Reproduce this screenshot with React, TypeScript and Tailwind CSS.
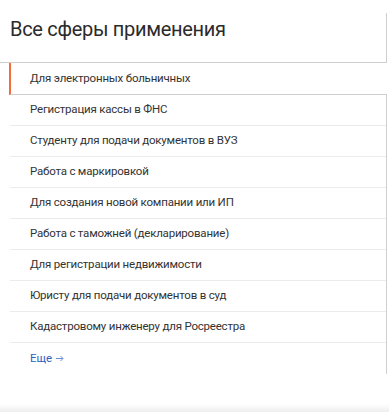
const items = [
  "Регистрация кассы в ФНС",
  "Студенту для подачи документов в ВУЗ",
  "Работа с маркировкой",
  "Для создания новой компании или ИП",
  "Работа с таможней (декларирование)",
  "Для регистрации недвижимости",
  "Юристу для подачи документов в суд",
  "Кадастровому инженеру для Росреестра",
];

export default function App() {
  return (
    <div className="flex h-[412px] w-[389px] flex-col overflow-hidden bg-white font-['Roboto',sans-serif] text-[#333]">
      <div className="pt-[13px]">
        <div className="h-[50px] w-[387px] border-r border-b border-[#cfcfcf] pt-[5px] pl-[10px]">
          <h1 className="text-[20px] leading-[22px] tracking-[-0.3px] text-[#2b2b2b]">Все сферы применения</h1>
        </div>
      </div>
      <div className="ml-[9px] flex h-[32px] w-[378px] items-center border-l-2 border-b border-l-[#f26d3d] border-b-[#cfcfcf] pl-[19px] text-[11.5px] tracking-[-0.2px]">
        Для электронных больничных
      </div>
      <div className="ml-[10px] w-[377px] border-r border-[#cfcfcf]">
        {items.map((t) => (
          <div key={t} className="flex h-[31px] items-center border-b border-[#ececec] pl-[20px] text-[11.5px] tracking-[-0.2px]">
            {t}
          </div>
        ))}
        <div className="flex h-[31px] items-center gap-[4px] pl-[20px] text-[11.5px] text-[#2f5fbf]">
          <span>Еще</span>
          <svg width="8" height="7" viewBox="0 0 8 7" fill="none" stroke="#6b8fd6" strokeWidth="1">
            <path d="M0 3.5h7M4.5 1l2.5 2.5L4.5 6" />
          </svg>
        </div>
      </div>
      <div className="mt-auto h-[8px] bg-gradient-to-b from-white to-[#eeeeee]" />
    </div>
  );
}
